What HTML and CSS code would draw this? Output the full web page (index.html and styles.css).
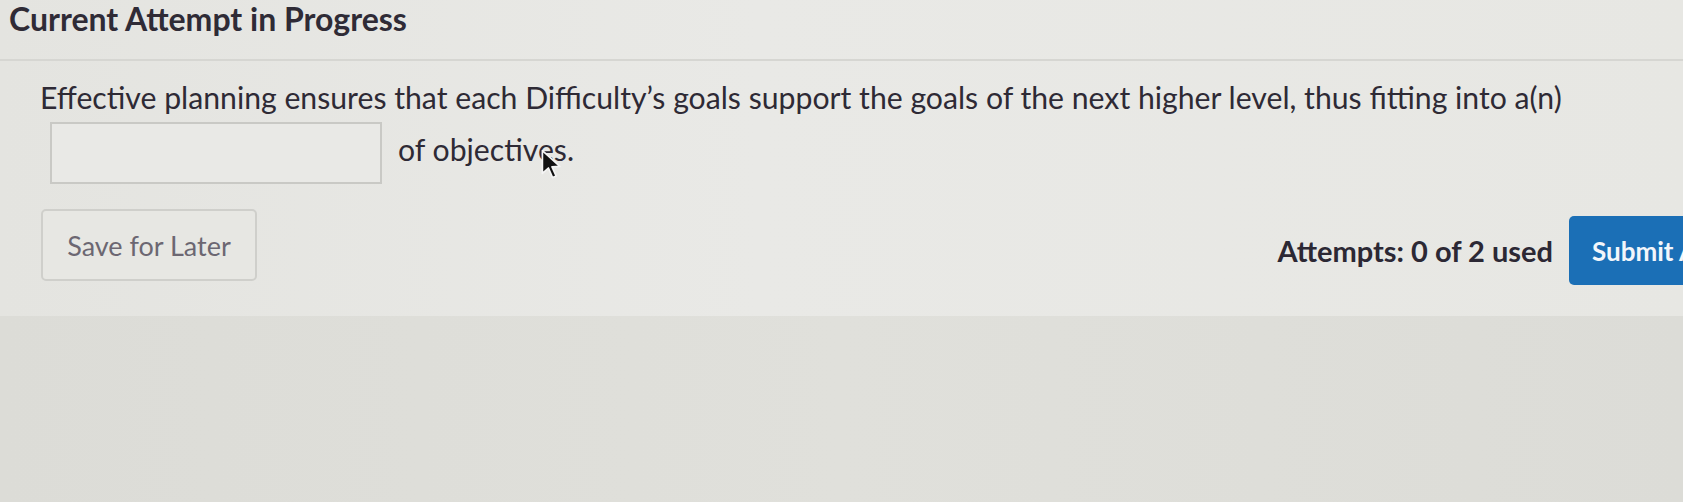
FILE: index.html
```html
<!DOCTYPE html>
<html lang="en">
<head>
<meta charset="utf-8">
<title>Current Attempt in Progress</title>
<link rel="stylesheet" href="styles.css">
</head>
<body>
<div class="screen">
  <section class="panel">
    <h1 class="title">Current Attempt in Progress</h1>
    <hr class="divider">
    <div class="question">
      <p class="prompt">Effective planning ensures that each Difficulty’s goals support the goals of the next higher level, thus fitting into a(n)</p>
      <div class="answer-row">
        <input class="blank" type="text" aria-label="answer">
        <span class="tail">of objectives.</span>
        <svg class="cursor" width="24" height="34" viewBox="0 0 20 28" aria-hidden="true">
          <path d="M2 2 L2 21 L7 16.5 L10.5 24.5 L13.5 23.2 L10 15.5 L16.5 15.2 Z" fill="#111" stroke="#f4f4f4" stroke-width="1.4" stroke-linejoin="round"/>
        </svg>
      </div>
    </div>
    <div class="actions">
      <button class="save" type="button">Save for Later</button>
      <div class="submit-group">
        <span class="attempts">Attempts: 0 of 2 used</span>
        <button class="submit" type="button">Submit Answer</button>
      </div>
    </div>
  </section>
  <section class="lower"></section>
</div>
</body>
</html>
```
FILE: styles.css
```css
html, body {
  margin: 0;
  padding: 0;
  height: 100%;
  overflow: hidden;
}
body {
  background: #dcdcd7;
  font-family: Lato, "Open Sans", "Liberation Sans", sans-serif;
  color: #2e2a35;
}
.screen {
  display: flex;
  flex-direction: column;
  height: 100%;
}
.panel {
  background: linear-gradient(90deg, #e4e4e0 0%, #e9e9e6 45%, #e7e7e3 100%);
  height: 316px;
  box-sizing: border-box;
  overflow: hidden;
}
.title {
  margin: 0;
  padding: 0 0 0 9px;
  font-size: 32px;
  line-height: 38px;
  font-weight: 700;
  color: #2f2b36;
}
.divider {
  margin: 21px 0 0 0;
  border: 0;
  border-top: 2px solid #d6d6d2;
  height: 0;
}
.question {
  padding: 17px 0 0 40px;
}
.prompt {
  margin: 0;
  font-size: 30.2px;
  line-height: 38px;
  color: #2e2a35;
  white-space: nowrap;
}
.answer-row {
  display: flex;
  align-items: center;
  margin-top: 6px;
  padding-left: 10px;
  position: relative;
}
.blank {
  width: 332px;
  height: 62px;
  box-sizing: border-box;
  border: 2px solid #c9c9c5;
  background: #e9e9e6;
  margin: 0;
  padding: 0;
}
.tail {
  margin-left: 16px;
  font-size: 30.2px;
  color: #2e2a35;
  position: relative;
  top: -4px;
}
.cursor {
  position: absolute;
  left: 500px;
  top: 26px;
}
.actions {
  display: flex;
  justify-content: space-between;
  align-items: flex-start;
  margin: 25px -86px 0 41px;
}
.save {
  width: 216px;
  height: 72px;
  box-sizing: border-box;
  border: 2px solid #cfcfcb;
  border-radius: 5px;
  background: #e7e7e3;
  font-family: inherit;
  font-size: 27px;
  color: #6c6772;
  padding: 0;
  margin: 0;
}
.submit-group {
  display: flex;
  align-items: center;
  gap: 16px;
}
.attempts {
  font-size: 29px;
  font-weight: 700;
  color: #2c2834;
  margin-top: 7px;
}
.submit {
  width: 200px;
  height: 69px;
  border: 0;
  border-radius: 5px;
  background: #1b6fb6;
  color: #f2f6fb;
  font-family: inherit;
  font-size: 26px;
  font-weight: 700;
  text-align: left;
  padding: 0 0 0 23px;
  margin: 7px 0 0 0;
  white-space: nowrap;
}
.lower {
  flex: 1;
  background: linear-gradient(90deg, #dcdcd7 0%, #e0e0db 50%, #dcdcd7 100%);
}
```
